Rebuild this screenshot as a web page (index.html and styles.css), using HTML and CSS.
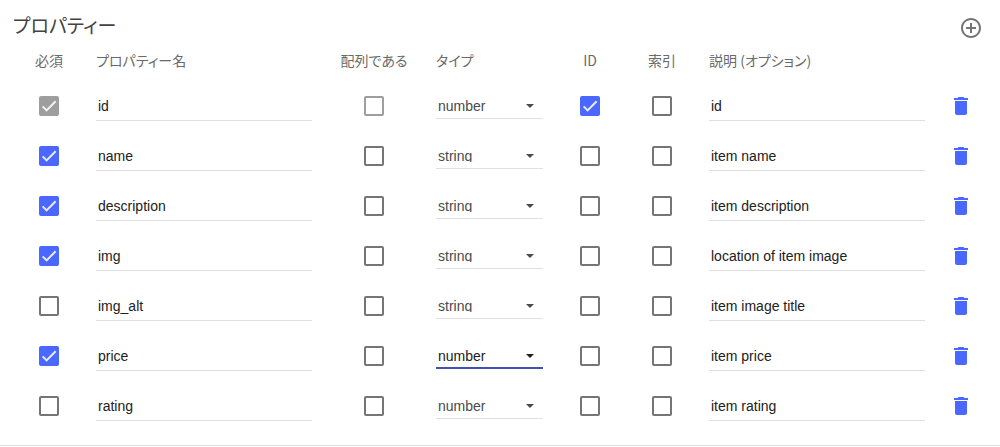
FILE: index.html
```html
<!DOCTYPE html>
<html lang="ja">
<head>
<meta charset="utf-8">
<title>プロパティー</title>
<link rel="stylesheet" href="styles.css">
</head>
<body>
<svg class="sprite" aria-hidden="true">
  <symbol id="trash" viewBox="0 0 24 24"><path d="M6 19c0 1.100.9 2 2 2h8c1.100 0 2-.9 2-2V7H6v12zM19 4h-3.500l-1-1h-5l-1 1H5v2h14V4z"/></symbol>
</svg>
<section class="panel">
  <header class="panel-header">
    <h2 class="panel-title">プロパティー</h2>
    <button class="icon-button add" type="button" aria-label="追加">
      <svg class="icon" viewBox="0 0 24 24"><path d="M13 7h-2v4H7v2h4v4h2v-4h4v-2h-4V7zm-1-5C6.480 2 2 6.480 2 12s4.480 10 10 10 10-4.480 10-10S17.520 2 12 2zm0 18c-4.410 0-8-3.590-8-8s3.590-8 8-8 8 3.590 8 8-3.590 8-8 8z"/></svg>
    </button>
  </header>
  <table class="properties">
    <colgroup>
      <col class="col-required"><col><col class="col-array"><col class="col-type"><col class="col-id"><col class="col-index"><col><col class="col-delete">
    </colgroup>
    <thead>
      <tr>
        <th class="required" id="h-required">必須</th>
        <th class="text" id="h-name">プロパティー名</th>
        <th id="h-array">配列である</th>
        <th class="text" id="h-type">タイプ</th>
        <th id="h-id">ID</th>
        <th id="h-index">索引</th>
        <th class="text" id="h-desc">説明 (オプション)</th>
        <td></td>
      </tr>
    </thead>
    <tbody>
      <tr>
        <td class="required"><input class="check" type="checkbox" aria-labelledby="h-required" checked disabled></td>
        <td><input class="field" type="text" aria-labelledby="h-name" value="id"></td>
        <td><input class="check" type="checkbox" aria-labelledby="h-array" disabled></td>
        <td class="type"><div class="picker"><select class="select" aria-labelledby="h-type"><option>string</option><option selected>number</option></select></div></td>
        <td><input class="check" type="checkbox" aria-labelledby="h-id" checked></td>
        <td><input class="check" type="checkbox" aria-labelledby="h-index"></td>
        <td><input class="field" type="text" aria-labelledby="h-desc" value="id"></td>
        <td class="delete"><button class="icon-button" type="button" aria-label="削除"><svg class="icon"><use href="#trash"/></svg></button></td>
      </tr>
      <tr>
        <td class="required"><input class="check" type="checkbox" aria-labelledby="h-required" checked></td>
        <td><input class="field" type="text" aria-labelledby="h-name" value="name"></td>
        <td><input class="check" type="checkbox" aria-labelledby="h-array"></td>
        <td class="type"><div class="picker"><select class="select" aria-labelledby="h-type"><option selected>string</option><option>number</option></select></div></td>
        <td><input class="check" type="checkbox" aria-labelledby="h-id"></td>
        <td><input class="check" type="checkbox" aria-labelledby="h-index"></td>
        <td><input class="field" type="text" aria-labelledby="h-desc" value="item name"></td>
        <td class="delete"><button class="icon-button" type="button" aria-label="削除"><svg class="icon"><use href="#trash"/></svg></button></td>
      </tr>
      <tr>
        <td class="required"><input class="check" type="checkbox" aria-labelledby="h-required" checked></td>
        <td><input class="field" type="text" aria-labelledby="h-name" value="description"></td>
        <td><input class="check" type="checkbox" aria-labelledby="h-array"></td>
        <td class="type"><div class="picker"><select class="select" aria-labelledby="h-type"><option selected>string</option><option>number</option></select></div></td>
        <td><input class="check" type="checkbox" aria-labelledby="h-id"></td>
        <td><input class="check" type="checkbox" aria-labelledby="h-index"></td>
        <td><input class="field" type="text" aria-labelledby="h-desc" value="item description"></td>
        <td class="delete"><button class="icon-button" type="button" aria-label="削除"><svg class="icon"><use href="#trash"/></svg></button></td>
      </tr>
      <tr>
        <td class="required"><input class="check" type="checkbox" aria-labelledby="h-required" checked></td>
        <td><input class="field" type="text" aria-labelledby="h-name" value="img"></td>
        <td><input class="check" type="checkbox" aria-labelledby="h-array"></td>
        <td class="type"><div class="picker"><select class="select" aria-labelledby="h-type"><option selected>string</option><option>number</option></select></div></td>
        <td><input class="check" type="checkbox" aria-labelledby="h-id"></td>
        <td><input class="check" type="checkbox" aria-labelledby="h-index"></td>
        <td><input class="field" type="text" aria-labelledby="h-desc" value="location of item image"></td>
        <td class="delete"><button class="icon-button" type="button" aria-label="削除"><svg class="icon"><use href="#trash"/></svg></button></td>
      </tr>
      <tr>
        <td class="required"><input class="check" type="checkbox" aria-labelledby="h-required"></td>
        <td><input class="field" type="text" aria-labelledby="h-name" value="img_alt"></td>
        <td><input class="check" type="checkbox" aria-labelledby="h-array"></td>
        <td class="type"><div class="picker"><select class="select" aria-labelledby="h-type"><option selected>string</option><option>number</option></select></div></td>
        <td><input class="check" type="checkbox" aria-labelledby="h-id"></td>
        <td><input class="check" type="checkbox" aria-labelledby="h-index"></td>
        <td><input class="field" type="text" aria-labelledby="h-desc" value="item image title"></td>
        <td class="delete"><button class="icon-button" type="button" aria-label="削除"><svg class="icon"><use href="#trash"/></svg></button></td>
      </tr>
      <tr>
        <td class="required"><input class="check" type="checkbox" aria-labelledby="h-required" checked></td>
        <td><input class="field" type="text" aria-labelledby="h-name" value="price"></td>
        <td><input class="check" type="checkbox" aria-labelledby="h-array"></td>
        <td class="type"><div class="picker active"><select class="select" aria-labelledby="h-type"><option>string</option><option selected>number</option></select></div></td>
        <td><input class="check" type="checkbox" aria-labelledby="h-id"></td>
        <td><input class="check" type="checkbox" aria-labelledby="h-index"></td>
        <td><input class="field" type="text" aria-labelledby="h-desc" value="item price"></td>
        <td class="delete"><button class="icon-button" type="button" aria-label="削除"><svg class="icon"><use href="#trash"/></svg></button></td>
      </tr>
      <tr>
        <td class="required"><input class="check" type="checkbox" aria-labelledby="h-required"></td>
        <td><input class="field" type="text" aria-labelledby="h-name" value="rating"></td>
        <td><input class="check" type="checkbox" aria-labelledby="h-array"></td>
        <td class="type"><div class="picker"><select class="select" aria-labelledby="h-type"><option>string</option><option selected>number</option></select></div></td>
        <td><input class="check" type="checkbox" aria-labelledby="h-id"></td>
        <td><input class="check" type="checkbox" aria-labelledby="h-index"></td>
        <td><input class="field" type="text" aria-labelledby="h-desc" value="item rating"></td>
        <td class="delete"><button class="icon-button" type="button" aria-label="削除"><svg class="icon"><use href="#trash"/></svg></button></td>
      </tr>
    </tbody>
  </table>
</section>
</body>
</html>
```
FILE: styles.css
```css
* {
  box-sizing: border-box;
}

body {
  margin: 0;
  background: #fff;
  color: #212121;
  font: 14px/16px "Liberation Sans", "Noto Sans CJK JP", sans-serif;
}

.sprite {
  display: none;
}

.panel {
  padding-bottom: 14px;
  border-bottom: 1px solid #e0e0e0;
}

.panel-header {
  display: flex;
  justify-content: space-between;
  align-items: flex-start;
  padding: 16px 17px 0 13px;
}

.panel-title {
  margin: 0;
  color: #424242;
  font: 400 19px/18px "Noto Sans CJK JP", sans-serif;
  font-feature-settings: "palt";
}

.icon-button {
  display: flex;
  padding: 0;
  border: 0;
  background: none;
  color: #4a68ff;
  cursor: pointer;
}

.delete .icon-button {
  margin: 0 auto;
}

.add {
  color: #757575;
}

.icon {
  width: 24px;
  height: 24px;
  fill: currentColor;
}

.properties {
  width: 100%;
  table-layout: fixed;
  border-collapse: collapse;
}

.col-required { width: 96px; }
.col-array { width: 124px; }
.col-type { width: 129px; }
.col-id { width: 50px; }
.col-index { width: 94px; }
.col-delete { width: 75px; }

.properties th {
  height: 41px;
  padding: 0 0 2px;
  color: #6a6a6a;
  font: 400 14px/20px "Noto Sans CJK JP", sans-serif;
  font-feature-settings: "palt";
  text-align: center;
  white-space: nowrap;
}

.properties td {
  height: 50px;
  padding: 0;
  text-align: center;
  vertical-align: middle;
}

.properties thead td {
  height: 41px;
}

.properties .text {
  text-align: left;
}

.properties .required {
  padding-left: 2px;
}

.properties .type {
  padding-right: 22px;
}

.properties .delete {
  padding-right: 3px;
}

.check {
  display: block;
  appearance: none;
  width: 20px;
  height: 20px;
  margin: 0 auto;
  border: 2px solid #757575;
  border-radius: 2px;
}

.check:disabled {
  border-color: #9e9e9e;
}

.check:checked {
  border-color: #4a68ff;
  background: #4a68ff;
}

.check:checked:disabled {
  border-color: #9e9e9e;
  background: #9e9e9e;
}

.check:checked::before {
  content: "";
  display: block;
  height: 16px;
  background: rgba(255, 255, 255, 0.87);
  clip-path: polygon(6% 57%, 15% 48%, 35% 68%, 87% 16%, 96% 25%, 35% 86%);
}

.field {
  display: block;
  width: 100%;
  height: 29px;
  padding: 6px 2px;
  border: 0;
  border-bottom: 1px solid #e0e0e0;
  background: none;
  color: #212121;
  font: inherit;
  outline: 0;
}

.picker {
  display: grid;
  align-items: center;
  color: #4a4a4a;
}

.picker::after {
  content: "";
  grid-area: 1 / 1;
  justify-self: end;
  width: 8px;
  height: 4px;
  margin-right: 9px;
  background: currentColor;
  clip-path: polygon(0 0, 100% 0, 50% 100%);
  pointer-events: none;
}

.select {
  grid-area: 1 / 1;
  appearance: none;
  width: 100%;
  height: 25px;
  padding: 4px 24px 6px 2px;
  border: 0;
  border-bottom: 1px solid #e0e0e0;
  border-radius: 0;
  background: none;
  color: inherit;
  font: inherit;
  outline: 0;
}

.active {
  color: #212121;
}

.active .select {
  border-color: #3f51b5;
  box-shadow: inset 0 -1px #3f51b5;
}
```
